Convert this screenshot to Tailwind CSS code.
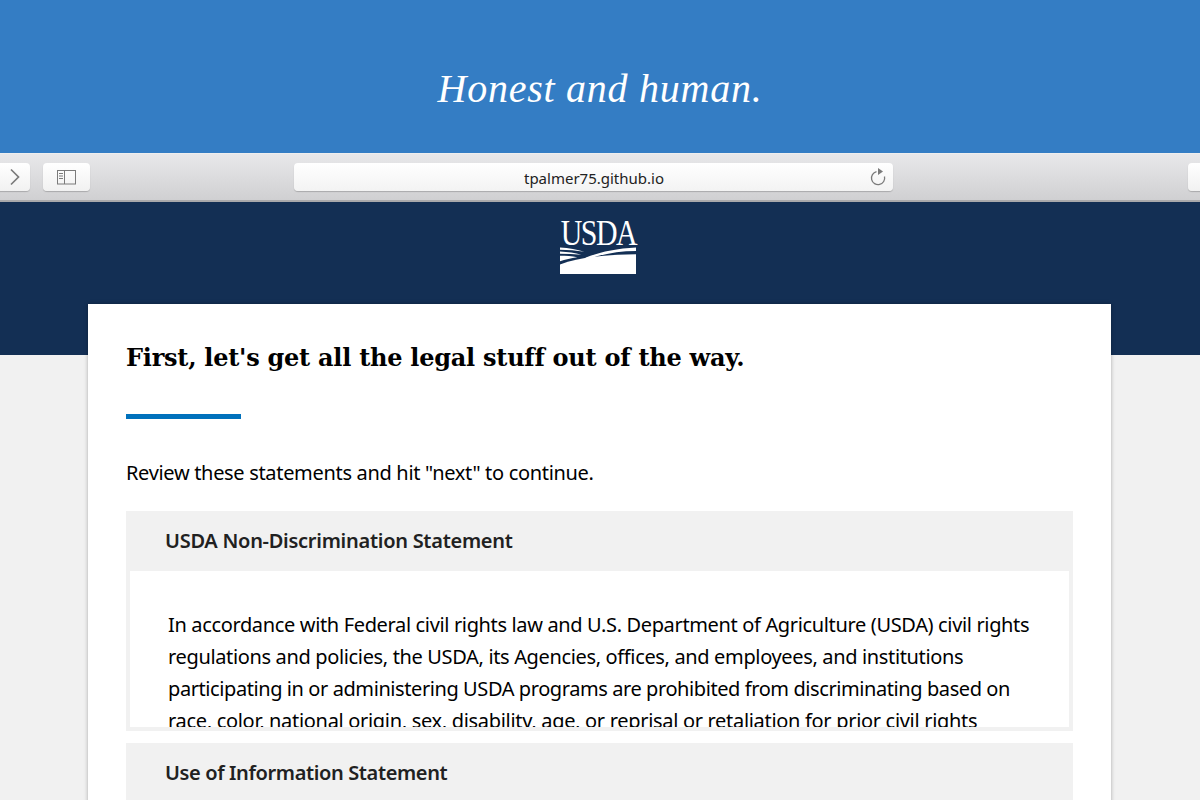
<!DOCTYPE html>
<html lang="en">
<head>
  <meta charset="UTF-8">
  <meta name="viewport" content="width=device-width, initial-scale=1.0">
  <title>Honest and human</title>
  <script src="https://cdn.jsdelivr.net/npm/@tailwindcss/browser@4"></script>
</head>
<body class="h-[800px] overflow-hidden bg-[#f1f1f1] font-['Noto_Sans',sans-serif] text-black">
  <!-- Blue banner -->
  <header class="h-[153px] bg-[#347dc4] flex items-center justify-center pt-[25px]">
    <h1 class="font-['Liberation_Serif',serif] italic text-[40px] leading-none tracking-[0.75px] text-white">Honest and human.</h1>
  </header>

  <!-- Browser toolbar -->
  <div class="relative h-[49px] overflow-hidden bg-gradient-to-b from-[#e8e8ea] to-[#d0d0d2] border-t border-t-[#eeeeee] border-b-2 border-b-[#a9a9ab]">
    <div class="absolute -left-[10px] top-[9px] w-[40px] h-[28px] rounded-[4px] bg-gradient-to-b from-white to-[#f1f1f1] shadow-[0_1px_1px_rgba(0,0,0,0.2)] flex items-center justify-end pr-[9px]">
      <svg width="12" height="18" viewBox="0 0 12 18" fill="none" stroke="#7b7b7b" stroke-width="1.7"><path d="M2 1.5 L9.5 9 L2 16.5"/></svg>
    </div>
    <div class="absolute left-[43px] top-[9px] w-[47px] h-[28px] rounded-[4px] bg-gradient-to-b from-white to-[#f1f1f1] shadow-[0_1px_1px_rgba(0,0,0,0.2)] flex items-center justify-center">
      <svg width="20" height="16" viewBox="0 0 20 16" fill="none" stroke="#7b7b7b"><rect x="0.5" y="1.5" width="18" height="13.5"/><path d="M7.5 1.5V15"/><path d="M2 4.5H6M2 7H6M2 9.5H6" stroke-width="1.2"/></svg>
    </div>
    <div class="absolute left-[294px] top-[9px] w-[599px] h-[28px] rounded-[4px] bg-gradient-to-b from-white to-[#f3f3f3] shadow-[0_1px_1px_rgba(0,0,0,0.2)] flex items-center justify-center pl-[1px] pt-[2px] text-[15px] text-[#222]">
      tpalmer75.github.io
      <svg class="absolute right-[6px] top-[4px]" width="18" height="20" viewBox="0 0 18 20" fill="none" stroke="#7b7b7b" stroke-width="1.3"><path d="M7.5 4.6 A6.6 6.6 0 1 0 15.5 9.5"/><path d="M9 1 L14 4.6 L9 8 Z" fill="#7b7b7b" stroke="none"/></svg>
    </div>
    <div class="absolute left-[1188px] top-[9px] w-[40px] h-[28px] rounded-[4px] bg-gradient-to-b from-white to-[#f1f1f1] shadow-[0_1px_1px_rgba(0,0,0,0.2)]"></div>
  </div>

  <!-- Navy band with logo -->
  <div class="h-[153px] bg-[#132f54] flex justify-center pt-[15px] pr-[4px]">
    <div class="w-[76px] text-white flex flex-col items-center">
      <span class="font-['Liberation_Serif',serif] text-[36px] leading-[33px] tracking-[-1.8px] h-[30px] scale-x-[0.83] whitespace-nowrap">USDA</span>
      <svg class="block" width="76" height="27" viewBox="0 0 75 27.7" preserveAspectRatio="none" fill="white">
        <path d="M75 0.5V4C58 4 42 7 28 12.5L25 11C38 5.5 55 1.5 75 0.5Z"/>
        <path d="M0 0.5C9 1 17 2.5 24 5C16 3.5 8 2.8 0 2.8Z"/>
        <path d="M0 4.5C8 4.8 15 6 21 8C14 7.2 7 7 0 7Z"/>
        <path d="M0 9C6 9 12 9.5 17 10.5C11 11.5 5 13 0 14.5Z"/>
        <path d="M0 18C20 10 45 8 75 7.5V27.7H0Z"/>
      </svg>
    </div>
  </div>

  <!-- Main card -->
  <main class="relative w-[1023px] h-[600px] -mt-[51px] ml-[88px] bg-white shadow-[0_0_4px_rgba(0,0,0,0.3)] px-[38px] pt-[37px]">
    <h2 class="font-['DejaVu_Serif',serif] font-bold text-[24px] leading-[34px] tracking-[-0.25px]">First, let's get all the legal stuff out of the way.</h2>
    <div class="w-[115px] h-[5px] mt-[39px] bg-[#0071bc]"></div>
    <p class="mt-[40px] text-[20px] leading-[28px] tracking-[-0.32px]">Review these statements and hit "next" to continue.</p>

    <section class="mt-[24px] h-[220px] bg-[#f1f1f1] px-[4px] pb-[4px] flex flex-col">
      <h3 class="h-[60px] pl-[35px] flex items-center font-semibold text-[20px] text-[#212121] tracking-[-0.27px]">USDA Non-Discrimination Statement</h3>
      <div class="flex-1 overflow-hidden bg-white pl-[38px] pt-[38px] text-[20px] leading-[32px] whitespace-nowrap tracking-[-0.35px]">
        <span class="block">In accordance with Federal civil rights law and U.S. Department of Agriculture (USDA) civil rights</span>
        <span class="block">regulations and policies, the USDA, its Agencies, offices, and employees, and institutions</span>
        <span class="block tracking-[-0.415px]">participating in or administering USDA programs are prohibited from discriminating based on</span>
        <span class="block tracking-[-0.31px]">race, color, national origin, sex, disability, age, or reprisal or retaliation for prior civil rights</span>
      </div>
    </section>

    <section class="mt-[12px] h-[100px] bg-[#f1f1f1] px-[4px]">
      <h3 class="h-[60px] pl-[35px] flex items-center font-semibold text-[20px] text-[#212121] tracking-[-0.37px]">Use of Information Statement</h3>
    </section>
  </main>
</body>
</html>
